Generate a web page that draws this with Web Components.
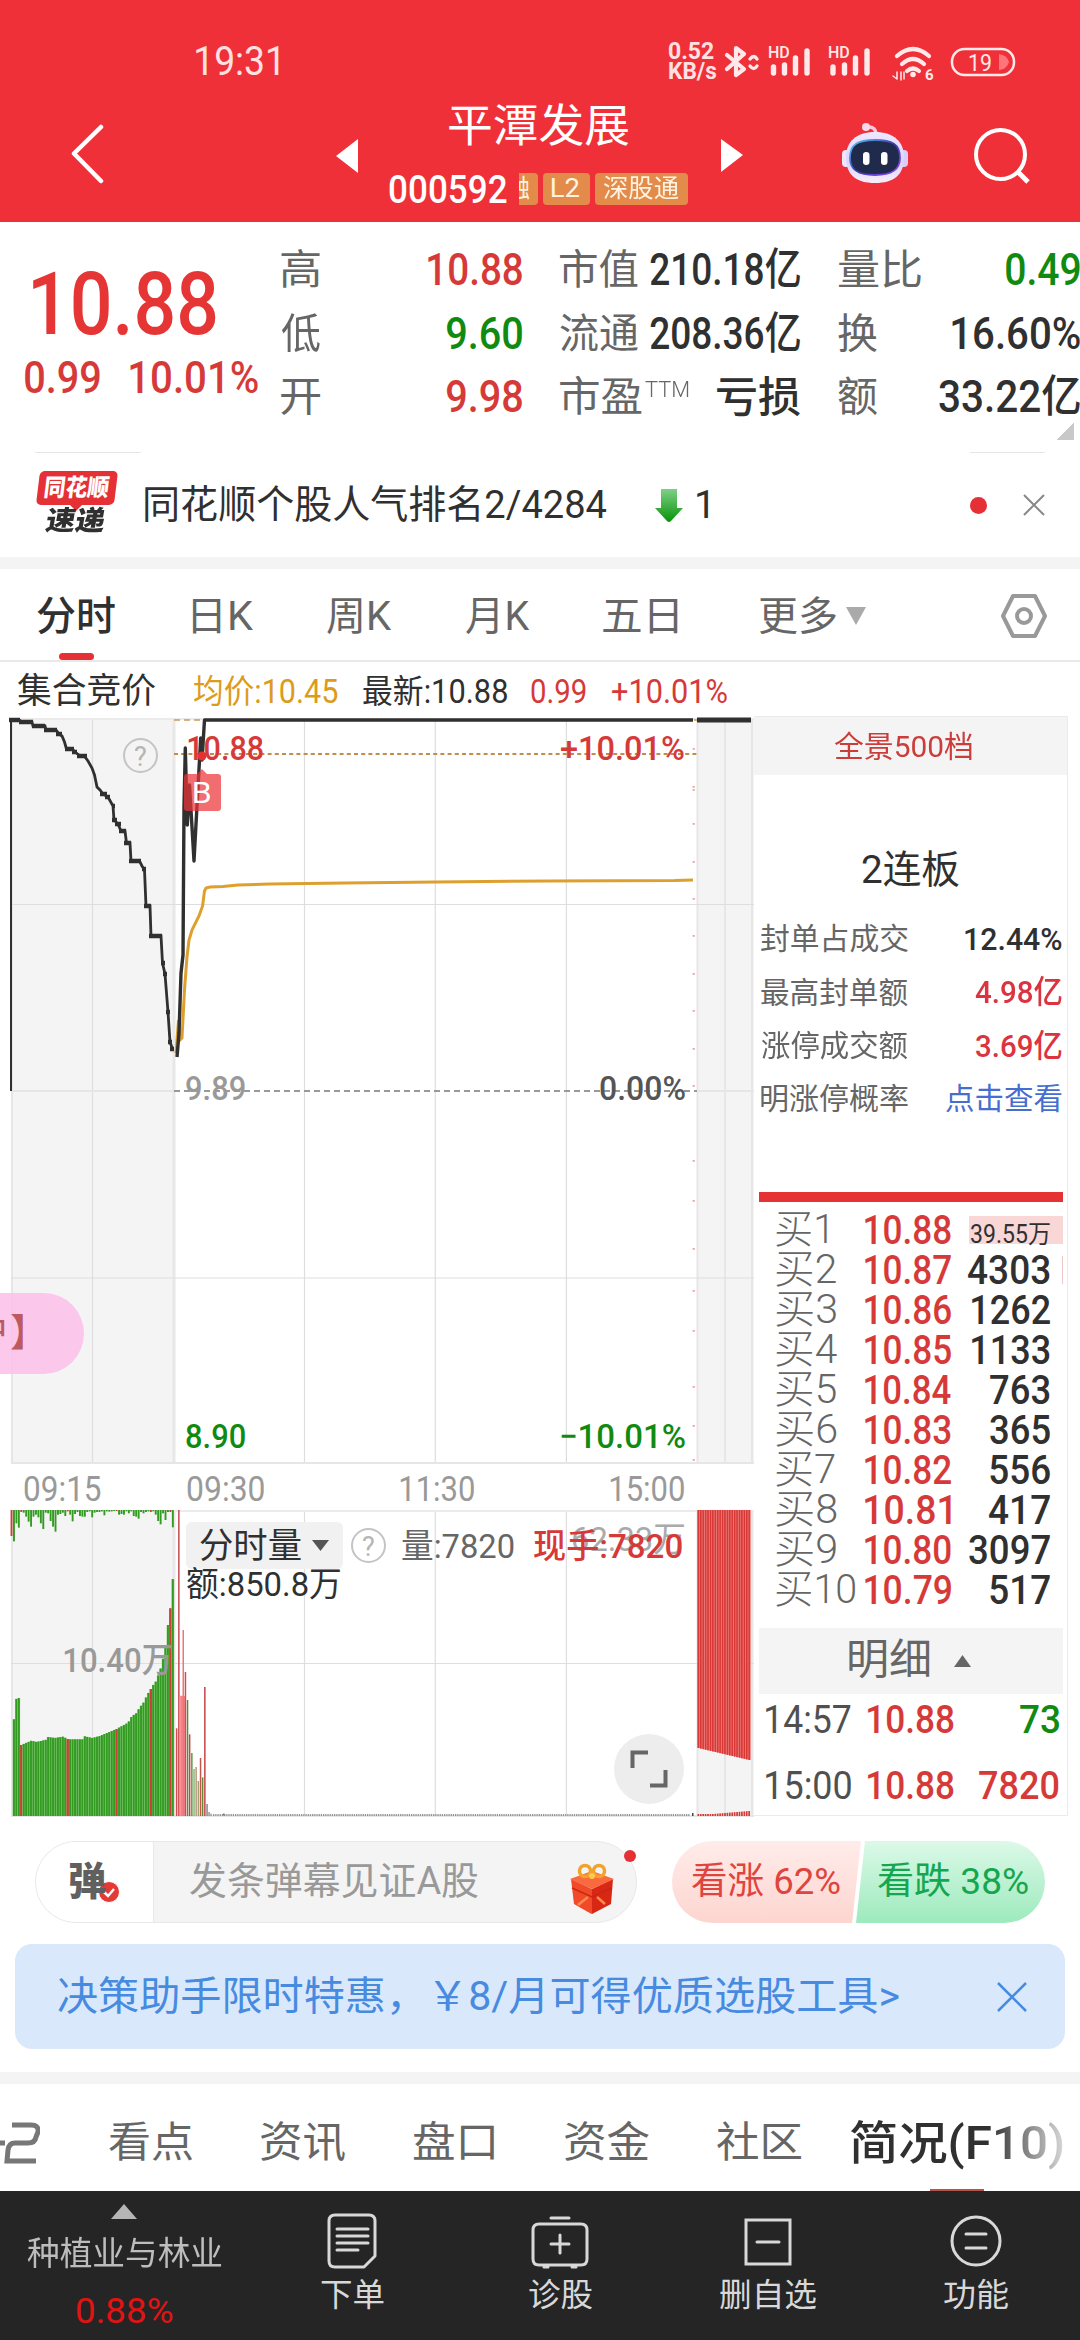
<!DOCTYPE html>
<html lang="zh-CN">
<head>
<meta charset="utf-8">
<title>平潭发展 000592</title>
<style>
    html, body { margin: 0; padding: 0; }
    body {
        --red: #d63a38;
        --green: #108a10;
        --ink: #303030;
        --muted: #666;
        width: 1080px;
        height: 2340px;
        overflow: hidden;
        background: #fff;
        color: var(--ink);
        font-family: Roboto, "Noto Sans CJK SC", sans-serif;
    }
</style>
</head>
<body>
<stock-app></stock-app>

<script>

const pen = document.createElement('canvas').getContext('2d');

// ink box of a string, so that text can be fitted to an exact width
const measure = (text, font) => {
    pen.font = font;
    const m = pen.measureText(text);
    return { left: m.actualBoundingBoxLeft, ink: m.actualBoundingBoxLeft + m.actualBoundingBoxRight };
};

const define = (name, markup, setup) => {
    const template = document.createElement('template');
    template.innerHTML = markup;
    customElements.define(name, class extends HTMLElement {
        constructor () {
            super();
            this.attachShadow({ mode: 'open' });
            this.shadowRoot.append(template.content.cloneNode(true));
        }
        connectedCallback () {
            if (setup) setup(this, this.shadowRoot);
        }
    });
};

// <fit-text w="120">text</fit-text>
define('fit-text', /*html*/ `
<style>
    :host { display: block; flex: none; line-height: 1.2; white-space: nowrap; }
    span { display: inline-block; transform-origin: 0 50%; white-space: pre; }
</style>
<span><slot></slot></span>
`, (host, root) => {
    const style = getComputedStyle(host);
    const font = `${style.fontWeight} ${style.fontSize} ${style.fontFamily}`;
    const { left, ink } = measure(host.textContent, font);
    const width = Number(host.getAttribute('w'));
    const k = width / ink;
    host.style.width = width + 'px';
    root.querySelector('span').style.transform = `translateX(${left * k}px) scaleX(${k})`;
});

define('status-bar', /*html*/ `
<style>
    :host { display: flex; align-items: center; height: 100px; padding: 12px 0 0 196px; color: #ffe1e2; box-sizing: content-box; }
    .time { font-size: 40px; }
    .speed { margin-left: 390px; font-size: 23px; font-weight: 700; line-height: 20px; }
    .speed fit-text { line-height: 20px; }
    svg { display: block; margin-left: 8px; }
    text { font-family: Roboto, sans-serif; }
</style>
<fit-text class="time" w="83">19:31</fit-text>
<div class="speed">
    <fit-text w="45">0.52</fit-text>
    <fit-text w="47">KB/s</fit-text>
</div>
<svg width="302" height="50" viewBox="724 37 302 50" fill="none" stroke="#ffe9ea" stroke-linecap="round" stroke-linejoin="round">
    <path d="M727 55l17 14-8 6V48l8 6-17 15" stroke-width="4.200"/>
    <path d="M750 59q4-5 7 0M750 66q4 5 7 0" stroke-width="3.400"/>
    <g stroke-width="5.4">
        <path d="M773.500 67v6M784.500 65v8M795.500 58v15M807 51v22"/>
        <path d="M833 67v6M844.500 65v8M855.500 58v15M867 51v22"/>
    </g>
    <path d="M897 56q16-14 32 0M902 64q11-10 22 0M907 71q6-5 12 0" stroke-width="4.200"/>
    <path d="M904 72v7M901 72v8M893 76l4 3v-7" stroke-width="1.500"/>
    <circle cx="913" cy="74.500" r="2.800" fill="#ffe9ea" stroke="none"/>
    <rect x="952" y="49" width="62" height="26" rx="12.500" stroke-width="2.500"/>
    <path d="M999 54q8 1 10 8-2 7-10 8z" fill="#ff757b" stroke="none"/>
    <g fill="#ffe9ea" stroke="none">
        <text x="768" y="58" font-size="16" font-weight="500">HD</text>
        <text x="828" y="58" font-size="16" font-weight="500">HD</text>
        <text x="925" y="80" font-size="15" font-weight="700">6</text>
        <text x="968" y="70.500" font-size="23" textLength="24" lengthAdjust="spacingAndGlyphs">19</text>
    </g>
</svg>
`);

define('stock-title', /*html*/ `
<style>
    :host { display: block; width: 299px; height: 110px; }
    .name { margin: -11px 0 0 60px; font-size: 45px; line-height: 52px; }
    .meta { display: flex; align-items: center; margin-top: 20px; height: 32px; }
    .code { font-size: 38px; font-weight: 500; line-height: 32px; margin-top: 1px; }
    .tag { height: 32px; border-radius: 4px; background: #e38b4b; font-size: 25px; display: flex; align-items: center; justify-content: center; margin-left: 5px; overflow: hidden; color: #fff3df; }
    .tag fit-text { line-height: 32px; }
    .cut { width: 19px; margin-left: 12px; justify-content: flex-end; border-radius: 0 4px 4px 0; }
    .cut fit-text { margin-right: 8px; }
</style>
<fit-text class="name" w="180">平潭发展</fit-text>
<div class="meta">
    <fit-text class="code" w="118">000592</fit-text>
    <div class="tag cut"><fit-text w="24">融</fit-text></div>
    <div class="tag" style="width:47px"><fit-text w="28">L2</fit-text></div>
    <div class="tag" style="width:94px"><fit-text w="76">深股通</fit-text></div>
</div>
`);

define('app-header', /*html*/ `
<style>
    :host { display: block; height: 222px; background: #f03038; color: #fff; }
    nav { display: flex; align-items: flex-start; }
    svg { display: block; flex: none; }
</style>
<status-bar></status-bar>
<nav>
    <svg style="margin:10px 0 0 70px" width="34" height="64" fill="none" stroke="#fff" stroke-width="4.500" stroke-linecap="round" stroke-linejoin="round"><path d="M31 5L4 31.500 31 59"/></svg>
    <svg style="margin:26px 0 0 232px" width="22" height="36"><path d="M22 1v34L0 18z" fill="#fff"/></svg>
    <stock-title style="margin-left:31px"></stock-title>
    <svg style="margin:26px 0 0 33px" width="22" height="36"><path d="M0 1v33l22-17z" fill="#fff"/></svg>
    <svg style="margin:10px 0 0 99px" width="67" height="63" viewBox="842 122 67 63">
        <defs>
            <linearGradient id="shell" x2="0" y2="1"><stop stop-color="#efe6ff"/><stop offset=".6" stop-color="#dcd4fb"/><stop offset="1" stop-color="#f7eefa"/></linearGradient>
            <linearGradient id="rim" x2="1" y2="1"><stop stop-color="#58c8f2"/><stop offset=".5" stop-color="#4038b0"/><stop offset="1" stop-color="#8b4df0"/></linearGradient>
        </defs>
        <path d="M867 127q9-1 9 8" fill="none" stroke="#f8c8de" stroke-width="3.500"/>
        <circle cx="866" cy="127" r="4" fill="#f6d9ef"/>
        <rect x="842" y="150" width="9" height="17" rx="4" fill="#eee6ff"/>
        <rect x="899" y="150" width="9" height="17" rx="4" fill="#d9cef9"/>
        <path d="M875 132c19 0 29 10 29 25 0 18-10 26-29 26s-29-8-29-26c0-15 10-25 29-25z" fill="url(#shell)"/>
        <path d="M875 140c17 0 25 4 25 18 0 12-8 17-25 17s-25-5-25-17c0-14 8-18 25-18z" fill="#202a4c" stroke="url(#rim)" stroke-width="1.800"/>
        <rect x="863" y="152" width="6.500" height="13" rx="3.200" fill="#fff"/>
        <rect x="881" y="152" width="6.500" height="13" rx="3.200" fill="#fff"/>
    </svg>
    <svg style="margin:14px 0 0 64px" width="60" height="60" fill="none" stroke="#fff" stroke-width="4"><circle cx="27.500" cy="28.500" r="24.500"/><path d="M44 45l11 11" stroke-width="5"/></svg>
</nav>
`);

define('quote-summary', /*html*/ `
<style>
    :host { display: flex; height: 230px; font-size: 44px; font-weight: 500; }
    .main { width: 281px; flex: none; color: var(--red); }
    .price { margin: 28.500px 0 0 33px; font-size: 87px; line-height: 106px; color: #e53535; }
    .change { display: flex; gap: 30px; margin: -5px 0 0 25px; }
    .cols { display: grid; grid-template-columns: 241px 38px 240px 38px 242px; grid-auto-rows: 63.500px; padding-top: 17px; height: 190px; }
    .cell { display: flex; align-items: center; justify-content: space-between; }
    .key { font-size: 41px; font-weight: 400; color: var(--muted); }
    .up { color: var(--red); }
    .down { color: var(--green); }
    .ttm { font-size: 22px; font-weight: 300; margin: -16px 22px 0 -3px; color: var(--muted); }
    .corner { align-self: flex-end; margin: 0 0 12px -23px; width: 17px; height: 18px; background: linear-gradient(135deg, transparent 50%, #c8c8c8 50%); }
</style>
<div class="main">
    <fit-text class="price" w="183">10.88</fit-text>
    <div class="change"><fit-text w="75">0.99</fit-text><fit-text w="128">10.01%</fit-text></div>
</div>
<div class="cols">
    <div class="cell"><fit-text class="key" w="39">高</fit-text><fit-text class="up" w="94">10.88</fit-text></div><i></i>
    <div class="cell"><fit-text class="key" w="78">市值</fit-text><fit-text w="150">210.18亿</fit-text></div><i></i>
    <div class="cell"><fit-text class="key" w="83">量比</fit-text><fit-text class="down" w="74">0.49</fit-text></div>
    <div class="cell"><fit-text class="key" w="39">低</fit-text><fit-text class="down" w="75">9.60</fit-text></div><i></i>
    <div class="cell"><fit-text class="key" w="78">流通</fit-text><fit-text w="150">208.36亿</fit-text></div><i></i>
    <div class="cell"><fit-text class="key" w="39">换</fit-text><fit-text w="128">16.60%</fit-text></div>
    <div class="cell"><fit-text class="key" w="39">开</fit-text><fit-text class="up" w="75">9.98</fit-text></div><i></i>
    <div class="cell"><fit-text class="key" w="82">市盈</fit-text><fit-text class="ttm" w="44">TTM</fit-text><fit-text w="83" style="font-size:42px">亏损</fit-text></div><i></i>
    <div class="cell"><fit-text class="key" w="39">额</fit-text><fit-text w="141">33.22亿</fit-text></div>
</div>
<div class="corner"></div>
`);

define('news-strip', /*html*/ `
<style>
    :host { display: block; height: 105px; border-bottom: 12px solid #f4f4f4; }
    .rules { display: flex; justify-content: space-between; padding: 0 35px; }
    .rules i { height: 1px; width: 75px; background: #e6e6e6; }
    .rules i:first-child { width: 106px; }
    .row { display: flex; align-items: center; height: 104px; font-size: 39px; }
    .logo { margin-left: 35px; width: 84px; height: 68px; }
    .badge { width: 78px; height: 34px; transform: skewX(-7deg); background: #e53035; border-radius: 5px; margin-left: 3px; color: #fff; font-size: 24px; font-weight: 900; display: flex; align-items: center; justify-content: center; }
    .tail { width: 0; height: 0; border: solid transparent; border-width: 6px 6px 0; border-top-color: #e53035; margin-left: 35px; }
    .word { font-size: 27px; font-weight: 900; transform: skewX(-10deg); margin: -6px 0 0 11px; line-height: 32px; }
    .dot { width: 17px; height: 17px; border-radius: 50%; background: #e53035; margin-left: 262px; }
</style>
<div class="rules"><i></i><i></i></div>
<div class="row">
    <div class="logo">
        <div class="badge"><fit-text w="64">同花顺</fit-text></div>
        <div class="tail"></div>
        <fit-text class="word" w="59">速递</fit-text>
    </div>
    <fit-text w="462" style="margin-left:26px">同花顺个股人气排名2/4284</fit-text>
    <svg width="28" height="33" style="margin-left:48px"><defs><linearGradient id="d" x2="0" y2="1"><stop stop-color="#7ed087"/><stop offset="1" stop-color="#079307"/></linearGradient></defs><path d="M6 0h16v19h6L16 32q-2 2-4 0L0 19h6z" fill="url(#d)"/></svg>
    <fit-text w="11" style="margin-left:14px">1</fit-text>
    <div class="dot"></div>
    <svg width="22" height="22" style="margin-left:36px" stroke="#888" stroke-width="2"><path d="M1 1l20 20M21 1L1 21"/></svg>
</div>
`);

define('period-tabs', /*html*/ `
<style>
    :host { display: flex; align-items: center; height: 93px; border-bottom: 2px solid #e9e9e9; box-sizing: border-box; font-size: 40px; color: var(--muted); }
    :host > fit-text { margin-top: 4px; }
    .on { width: 78px; height: 91px; margin-left: 37px; color: var(--ink); font-weight: 500; display: flex; flex-direction: column; align-items: center; }
    .on fit-text { line-height: 84px; margin-top: 6px; }
    .on i { width: 35px; height: 9px; border-radius: 4px; background: #e53035; margin-top: -6px; }
    .tab { margin-top: 4px; }
</style>
<div class="on"><fit-text w="78">分时</fit-text><i></i></div>
<fit-text class="tab" w="61" style="margin-left:78px">日K</fit-text>
<fit-text class="tab" w="65" style="margin-left:73px">周K</fit-text>
<fit-text class="tab" w="64" style="margin-left:74px">月K</fit-text>
<fit-text class="tab" w="75" style="margin-left:73px">五日</fit-text>
<fit-text class="tab" w="77" style="margin-left:81px">更多</fit-text>
<svg width="20" height="18" style="margin:2px 0 0 10px"><path d="M0 0h20L10 18z" fill="#aaa"/></svg>
<svg width="46" height="44" style="margin:3px 0 0 135px" fill="none" stroke="#999" stroke-width="4" stroke-linejoin="round"><path d="M12 2h22l10 20-10 20H12L2 22z"/><circle cx="23" cy="22" r="7"/></svg>
`);

define('price-line', /*html*/ `
<style>
    :host { display: flex; align-items: center; height: 54px; box-sizing: border-box; padding: 5px 0 0 18px; font-size: 33px; }
</style>
<fit-text w="137" style="font-size:35px">集合竞价</fit-text>
<fit-text w="144" style="margin-left:39px;color:#dd9b1c">均价:10.45</fit-text>
<fit-text w="144" style="margin-left:25px">最新:10.88</fit-text>
<fit-text w="55" style="margin-left:24px;color:var(--red)">0.99</fit-text>
<fit-text w="115" style="margin-left:26px;color:var(--red)">+10.01%</fit-text>
`);

define('trend-chart', /*html*/ `
<style>
    :host { display: block; flex: none; width: 754px; height: 1106px; }
    svg { display: block; }
</style>
<svg width="754" height="1106" viewBox="0 716 754 1106" fill="none">
    <g id="grid"></g>
    <g id="volume"></g>
    <g id="price"></g>
    <g id="labels" font-family="Roboto, 'Noto Sans CJK SC', sans-serif"></g>
</svg>
`, (host, root) => {
    const el = id => root.getElementById(id);
    const line = (x1, y1, x2, y2, color = '#dedede', width = 1.2, extra = '') =>
        `<path d="M${x1} ${y1}L${x2} ${y2}" stroke="${color}" stroke-width="${width}" ${extra}/>`;
    const rect = (x, y, w, h, fill, extra = '') =>
        `<rect x="${x}" y="${y}" width="${w}" height="${h}" fill="${fill}" ${extra}/>`;

    // background panels and grid
    let grid = '';
    for (const [top, bottom] of [[718, 1463], [1510, 1816]]) {
        grid += rect(11, top, 163, bottom - top, '#f4f4f4') + rect(697, top, 57, bottom - top, '#f4f4f4');
        grid += line(12, top, 12, bottom, '#e6e6e6', 2) + line(174, top, 174, bottom, '#e8e8e8', 3);
        grid += line(697.5, top, 697.5, bottom, '#e6e6e6', 2) + line(752, top, 752, bottom, '#e6e6e6', 2);
        for (const x of [92.5, 304.5, 435.3, 566.4, 725]) grid += line(x, top, x, bottom);
        grid += line(11, top + 1, 754, top + 1, '#ebebeb', 2) + line(11, bottom, 754, bottom, '#e6e6e6', 2);
    }
    for (const y of [904.5, 1278, 1663.5]) grid += line(11, y, 754, y);
    grid += line(11, 1091, 174, 1091, '#e6e6e6', 2) + line(697, 1091, 754, 1091, '#e6e6e6', 2);
    el('grid').innerHTML = grid;

    // call auction volume, one bar every 2.44px
    const green = '#339a22';
    const red = '#cc3f36';
    const upper = [78, 94, 40, 53, 6, 8, 20, 35, 50, 20, 14, 22, 40, 57, 8, 10, 33, 50, 65, 14, 12, 8, 18, 4, 14, 34, 12, 6, 18, 20, 20, 6, 4, 22, 8, 6, 6, 4, 16, 4, 5, 4, 3, 3, 14, 12, 14, 4, 10, 4, 18, 20, 26, 6, 10, 6, 4, 6, 4, 14, 33, 43, 10, 30, 6, 6, 52];
    const shape = [[42, 658], [50, 594], [57, 594], [64, 735], [95, 722], [110, 726], [140, 719], [145, 711], [165, 714], [190, 710], [205, 718], [247, 718], [254, 709], [278, 714], [300, 708], [350, 687], [385, 668], [395, 650], [408, 640], [430, 608], [452, 567], [467, 545], [480, 515], [490, 475], [498, 430], [503, 385], [511, 325], [519, 237]];
    const reds = [4, 23, 43, 57, 65];
    let volume = '';
    upper.forEach((length, i) => {
        const zx = 35 + i * 7.333;
        const x = zx / 3 - 1.1;
        const color = reds.includes(i) ? red : green;
        volume += rect(x, 1510, 1.9, length / 3, i === 0 ? red : color);
        if (i === 0) return;
        let n = shape.findIndex(p => p[0] >= zx - 1);
        if (n < 1) n = i === 1 ? 0 : n < 0 ? shape.length - 1 : n;
        const b = shape[n];
        const a = shape[n - 1] || b;
        const t = a === b ? 0 : Math.min(1, (zx - a[0]) / (b[0] - a[0]));
        const y = 1500 + (a[1] + (b[1] - a[1]) * t) / 3;
        volume += rect(x - .3, y, 2.5, 1816 - y, reds.includes(i) ? '#bc5a3c' : '#6bbf5c') + rect(x, y, 1.8, 1816 - y, color);
    });

    // continuous trading
    const trades = [[176.6, 685, '#d9494f'], [178.8, 30, '#c94a52'], [181, 587, '#f87c82'], [183.2, 390, '#e8767b'], [185.4, 516, '#d9494f'], [187.5, 600, '#5d8b35'], [189.6, 703, '#bd4a3e'], [191.8, 759, '#5e9948'], [194, 807, '#8fb777'], [196.1, 801, '#bc9684'], [198.3, 843, '#9ea36f'], [200.5, 774, '#c4564c'], [202.6, 832, '#5f8b39'], [204.8, 561, '#c94348'], [207, 912, '#888'], [209, 936, '#999'], [211, 941, '#999']];
    volume += rect(180.500, 1696, 5, 120, '#fb8c91');
    for (const [x, top, color] of trades) volume += rect(x - .7, 1500 + top / 3, 1.5, 316 - top / 3, color);
    volume += line(213, 1815, 690, 1815, '#777', 1.6, 'stroke-dasharray="1.3 .9"') + rect(223, 1813.5, 1.5, 2, '#777') + rect(692, 1813, 1.5, 3, '#444');

    // closing auction
    for (let x = 697.5, i = 0; x < 750; x += 2.42, i++) {
        const y = 1748 + i * .57;
        volume += rect(x, 1510, 2.42, y - 1510, '#ef7472') + rect(x, 1510, 1.6, y - 1510, '#d83835');
        const low = 1814 - Math.max(0, i - 6) * .2;
        volume += rect(x, low, 1.7, 1816 - low, '#d83835');
    }
    el('volume').innerHTML = volume;

    const dark = '#303030';
    const auction = '9,720 19,720 22,722 32,722 33,726 45,726 46,730 56,730 59,734 62,736 64.5,742 66.500,749 72,749 75,752 79,755 85,757 88,761 92,768 94.500,775 97,787 100,790 103,794 108,797 113,806 114,820 118,824 121,831 125,831 126.500,843 130,843 131,861 139.500,861 142,866 144.500,870 146,906 150,906 151,936 161,936 162.500,963 165,974 168,1012 170,1042 172.500,1049';
    let marks = '';
    for (const [x, y, w] of [[9, 720, 11], [19, 722, 14], [32, 726, 13], [44, 730, 13], [56, 734, 6], [65, 749, 9], [72, 752, 5], [77, 756, 10], [100, 794, 7], [105, 797, 5], [112, 806, 3], [112, 820, 5], [115, 824, 6], [119, 831, 7], [124, 843, 7], [129, 861, 12], [142, 869, 4], [144, 906, 7], [149, 936, 13], [161, 963, 4], [163, 974, 4], [166, 1012, 4], [168, 1042, 4], [170, 1049, 4]]) {
        marks += line(x, y, x + w, y, dark, 4.500);
    }
    let ticks = '';
    for (const y of [748, 786, 789, 823, 861, 898, 935, 973, 1010, 1048, 1085, 1160, 1200, 1248, 1290, 1330, 1386, 1425, 1459]) ticks += rect(692.500, y, 2.500, 1.800, '#efb0ae');
    el('price').innerHTML =
        line(174, 720, 697, 720, '#c69b63', 1.500, 'stroke-dasharray="6 4"') +
        line(174, 754, 697, 754, '#c28c4c', 1.800, 'stroke-dasharray="4 3.200"') +
        line(174, 1091, 697, 1091, '#999', 1.800, 'stroke-dasharray="6 4"') + ticks +
        line(11, 720, 11, 1091, dark, 2) +
        `<polyline points="${auction}" stroke="${dark}" stroke-width="2.800"/>` + marks +
        `<polyline points="176,1053 178.500,1020 180,1040 182,1038 184.500,990 187,957 189,940 192,930 199,916 202.600,906 204.500,891 206,888 210,887 223,886.500 238,885 270,884 345,883 436,882 550,881 675,880.500 693,880" stroke="#dda02e" stroke-width="3"/>
        <polyline points="177,1057 179,1033 181,973 183,955 184,807 185.300,748 187.300,825 189.500,785 194,861 200.700,738 202,760 204.500,720 693,720" stroke="${dark}" stroke-width="3.400" stroke-linejoin="round"/>` +
        line(697, 720, 751, 720, dark, 5) +
        `<circle cx="202" cy="756" r="4.500" fill="#e53035"/>
        <path d="M197 774l5-5 5 5h11q3 0 3 3v31q0 3-3 3h-31q-3 0-3-3v-31q0-3 3-3z" fill="#eb3438" fill-opacity=".72"/>`;

    // x, centre y, ink width, size, weight, colour
    const labels = [
        ['10.88', 188, 748, 75, 34, 500, '#d63a38'],
        ['+10.01%', 561, 748, 123, 34, 500, '#d63a38'],
        ['B', 194, 792.5, 16, 30, 400, '#fff'],
        ['9.89', 186, 1088, 59, 34, 500, '#999'],
        ['0.00%', 600, 1088, 85, 34, 500, '#555'],
        ['8.90', 186, 1436, 59, 34, 500, '#108a10'],
        ['−10.01%', 561, 1436, 124, 34, 500, '#108a10'],
        ['09:15', 24, 1489, 77, 35, 400, '#999'],
        ['09:30', 187, 1489, 77, 35, 400, '#999'],
        ['11:30', 400, 1489, 74, 35, 400, '#999'],
        ['15:00', 610, 1489, 74, 35, 400, '#999'],
        ['62.33万', 573, 1539, 111, 34, 400, '#aaa'],
        ['10.40万', 64, 1660, 107, 34, 500, '#999'],
        ['量:7820', 402, 1546, 112, 34, 400, '#666'],
        ['现手:7820', 534, 1546, 148, 34, 500, '#d63a38'],
        ['额:850.8万', 187, 1584, 153, 34, 400, '#303030'],
        ['分时量', 200, 1546, 101, 35, 400, '#303030'],
        ['?', 134, 756, 12, 27, 400, '#b5b5b5'],
        ['?', 362, 1546, 12, 27, 400, '#b5b5b5']
    ];
    let text = rect(186, 1522, 157, 47, '#f1f1f1', 'rx="6"');
    for (const [string, x, y, width, size, weight, color] of labels) {
        const { left, ink } = measure(string, `${weight} ${size}px Roboto, "Noto Sans CJK SC", sans-serif`);
        const k = width / ink;
        text += `<text transform="translate(${x + left * k} ${y + size * .355}) scale(${k} 1)" font-size="${size}" font-weight="${weight}" fill="${color}">${string}</text>`;
    }
    text += `<circle cx="140.500" cy="755.500" r="16.500" stroke="#c4c4c4" stroke-width="2"/>
        <circle cx="368.500" cy="1545.500" r="16.500" stroke="#c4c4c4" stroke-width="2"/>
        <path d="M312 1540h17l-8.500 11z" fill="#555"/>
        <circle cx="649" cy="1769" r="35" fill="#ededed"/>
        <path d="M632.500 1768v-15.500h15.500M665.500 1770v15.500h-15.500" stroke="#666" stroke-width="4"/>`;
    el('labels').innerHTML = text;
});

define('limit-row', /*html*/ `
<style>
    :host { display: flex; align-items: center; justify-content: space-between; height: 53.200px; padding: 0 5px 0 7px; font-size: 30px; }
    ::slotted(*) { color: var(--muted); }
    ::slotted([slot=value]) { color: var(--tone, var(--ink)); }
</style>
<slot></slot><slot name="value"></slot>
`);

define('order-book', /*html*/ `
<style>
    :host { display: block; flex: none; width: 314px; height: 1100px; box-sizing: border-box; border: 1px solid #ebebeb; border-left-width: 0; }
    .depth { display: flex; justify-content: center; height: 58px; background: #f4f4f4; color: #cb3d3a; font-size: 30px; }
    .depth fit-text { line-height: 60px; margin-right: 15px; }
    .streak { display: flex; justify-content: center; font-size: 39px; margin: 72px 0 19px 0; }
    .value { font-size: 32px; font-weight: 500; }
    .wall { height: 10px; background: #e53232; margin: 66px 4px 0 5px; }
    .levels { padding: 8px 4px 0 22px; }
    .level { display: grid; grid-template-columns: 89px 86px 1fr; align-items: center; height: 40px; font-size: 41px; font-weight: 500; }
    .level fit-text { line-height: 40px; }
    .level .side { font-size: 40px; font-weight: 300; color: var(--muted); }
    .level .cost { color: var(--red); }
    .lots { display: flex; justify-content: flex-end; padding-right: 13px; height: 28px; align-items: center; }
    .first { background: #f9d7d7; margin-left: 18px; font-size: 25px; font-weight: 400; }
    .first fit-text { margin-top: 11px; }
    .second { border-right: 1px solid #f0c8c8; padding-right: 12px; }
    .detail { display: flex; align-items: center; height: 66px; background: #f4f4f4; margin: 18px 4px 0 5px; color: var(--muted); font-size: 42px; }
    .deal { display: flex; height: 66px; align-items: center; padding: 0 8px 0 12px; font-size: 39px; font-weight: 500; }
    .deal :first-child { color: #505050; font-weight: 400; }
    .deal :last-child { margin-left: auto; }
    .up { color: var(--red); }
    .down { color: var(--green); }
</style>
<div class="depth"><fit-text w="138">全景500档</fit-text></div>
<div class="streak"><fit-text w="97">2连板</fit-text></div>
<limit-row><fit-text w="147">封单占成交</fit-text><fit-text class="value" slot="value" w="97">12.44%</fit-text></limit-row>
<limit-row style="--tone:#dc3340"><fit-text w="147">最高封单额</fit-text><fit-text class="value" slot="value" w="87">4.98亿</fit-text></limit-row>
<limit-row style="--tone:#dc3340"><fit-text w="147">涨停成交额</fit-text><fit-text class="value" slot="value" w="86">3.69亿</fit-text></limit-row>
<limit-row style="--tone:#466dd0"><fit-text w="147">明涨停概率</fit-text><fit-text slot="value" w="116">点击查看</fit-text></limit-row>
<div class="wall"></div>
<div class="levels"></div>
<div class="detail">
    <fit-text w="81" style="margin-left:90px">明细</fit-text>
    <svg width="17" height="12" style="margin-left:24px"><path d="M0 12L8.500 0 17 12z" fill="#666"/></svg>
</div>
<div class="deal" style="margin-top:-6px"><fit-text w="85">14:57</fit-text><fit-text class="up" w="86" style="margin-left:17px">10.88</fit-text><fit-text class="down" w="39">73</fit-text></div>
<div class="deal"><fit-text w="85">15:00</fit-text><fit-text class="up" w="86" style="margin-left:17px">10.88</fit-text><fit-text class="up" w="80">7820</fit-text></div>
`, (host, root) => {
    const lots = [['39.55万', 79], ['4303', 82], ['1262', 78], ['1133', 78], ['763', 60], ['365', 60], ['556', 60], ['417', 61], ['3097', 81], ['517', 60]];
    root.querySelector('.levels').innerHTML = lots.map(([lot, width], i) => `
        <div class="level">
            <fit-text class="side" w="${[51, 60, 60, 61, 60, 61, 59, 61, 60, 79][i]}">买${i + 1}</fit-text>
            <fit-text class="cost" w="86">${(10.88 - i / 100).toFixed(2)}</fit-text>
            <div class="lots ${['first', 'second'][i] || ''}"><fit-text w="${width}">${lot}</fit-text></div>
        </div>`).join('');
});

define('comment-bar', /*html*/ `
<style>
    :host { display: flex; align-items: center; height: 82px; padding: 19px 0 0 35px; font-size: 38px; }
    .field { display: flex; align-items: center; width: 602px; height: 82px; box-sizing: border-box; border: 1px solid #e8e8e8; border-radius: 41px; background: #f4f4f4; position: relative; }
    .mark { display: flex; align-items: center; width: 117px; height: 80px; border-radius: 40px 0 0 40px; background: #fff; border-right: 1px solid #e8e8e8; font-weight: 900; }
    .check { margin: 20px 0 0 -8px; }
    .dot { position: absolute; right: 0; top: 8px; width: 12px; height: 12px; border-radius: 50%; background: #e53035; }
    .vote { display: flex; margin-left: 35px; width: 373px; height: 82px; border-radius: 41px; overflow: hidden; }
    .vote div { display: flex; align-items: center; font-size: 37px; box-sizing: border-box; }
    .bull { width: 189px; padding-left: 20px; color: #e0443e; background: linear-gradient(#ffecea, #fdd5d0); clip-path: polygon(0 0, 100% 0, 180px 100%, 0 100%); }
    .bear { width: 190px; margin-left: -6px; padding-left: 23px; color: #15a650; background: linear-gradient(#dcf9e8, #9deabd); clip-path: polygon(10px 0, 100% 0, 100% 100%, 1px 100%); }
</style>
<div class="field">
    <div class="mark">
        <fit-text w="36" style="margin-left:34px;font-size:39px;color:#606060">弹</fit-text>
        <svg class="check" width="22" height="22"><circle cx="11" cy="11" r="10.500" fill="#e53935" stroke="#fff"/><path d="M6 11l4 4 6-7" fill="none" stroke="#fff" stroke-width="2.500"/></svg>
    </div>
    <fit-text w="288" style="margin-left:36px;color:#999">发条弹幕见证A股</fit-text>
    <svg width="46" height="52" style="margin:13px 0 0 91px" viewBox="569 1864 46 52">
        <path d="M571 1880l21 10v25q-1 0-18-10z" fill="#f04a28"/>
        <path d="M613 1880l-21 10v25l19-10z" fill="#d92716"/>
        <path d="M570 1880l22-8 22 8-22 10z" fill="#fa6a40"/>
        <path d="M572 1889l20 9 20-9" fill="none" stroke="#c92613" stroke-width="1.500"/>
        <path d="M588 1898l-10 8M597 1898l8 7" stroke="#ff8a50" stroke-width="2.500"/>
        <g fill="none" stroke="#f2a32c" stroke-width="3.500"><ellipse cx="585" cy="1872" rx="5.500" ry="5.500"/><ellipse cx="599" cy="1872" rx="5.500" ry="5.500"/></g>
        <circle cx="592" cy="1877" r="3" fill="#ffc94c"/>
    </svg>
    <i class="dot"></i>
</div>
<div class="vote">
    <div class="bull"><fit-text w="148">看涨 62%</fit-text></div>
    <div class="bear"><fit-text w="150">看跌 38%</fit-text></div>
</div>
`);

define('promo-banner', /*html*/ `
<style>
    :host { display: flex; align-items: center; height: 105px; margin: 21px 15px 23px; border-radius: 17px; background: #dae8fb; color: #468be0; font-size: 40px; }
</style>
<fit-text w="841" style="margin-left:43px">决策助手限时特惠，￥8/月可得优质选股工具></fit-text>
<svg width="30" height="30" style="margin-left:98px" stroke="#468be0" stroke-width="2.500"><path d="M1 1l28 28M29 1L1 29"/></svg>
`);

define('section-tabs', /*html*/ `
<style>
    :host { display: flex; align-items: center; height: 107px; border-top: 12px solid #f4f4f4; font-size: 42px; color: var(--muted); overflow: hidden; }
    fit-text { margin-top: 12px; }
    .on { position: relative; margin-left: 49px; width: 213px; height: 107px; display: flex; align-items: center; color: var(--ink); font-size: 46px; font-weight: 500; }
    .on fit-text { -webkit-mask-image: linear-gradient(90deg, #000 65%, rgba(0, 0, 0, .2)); mask-image: linear-gradient(90deg, #000 65%, rgba(0, 0, 0, .2)); }
    .on i { position: absolute; bottom: 0; left: 80px; width: 54px; height: 2px; background: #b8534c; }
</style>
<svg width="40" height="44" style="margin-top:10px" fill="none" stroke="#777" stroke-width="5"><path d="M0 22h5M12 4h19q8 0 7 7l-2 5q-1 6-8 6H15q-6 0-7 7l-1 11h29"/></svg>
<fit-text w="83" style="margin-left:69px">看点</fit-text>
<fit-text w="84" style="margin-left:69px">资讯</fit-text>
<fit-text w="81" style="margin-left:68px">盘口</fit-text>
<fit-text w="84" style="margin-left:71px">资金</fit-text>
<fit-text w="84" style="margin-left:68px">社区</fit-text>
<div class="on"><fit-text w="213">简况(F10)</fit-text><i></i></div>
`);

define('nav-item', /*html*/ `
<style>
    :host { display: flex; flex-direction: column; align-items: center; width: 208px; font-size: 32px; color: #d8d8d8; }
    .icon { height: 56px; margin-top: 22px; }
    .label { margin-top: 7px; }
</style>
<div class="icon"><slot name="icon"></slot></div>
<div class="label"><slot></slot></div>
`);

define('bottom-nav', /*html*/ `
<style>
    :host { display: flex; height: 149px; background: #252525; }
    .sector { display: flex; flex-direction: column; align-items: center; width: 248px; flex: none; color: #bdbdbd; font-size: 33px; }
    .sector svg { margin-top: 12px; }
    svg { display: block; fill: none; stroke: #d8d8d8; stroke-width: 3; stroke-linecap: round; stroke-linejoin: round; }
</style>
<div class="sector">
    <svg width="26" height="16"><path d="M0 16L13 1l13 15z" fill="#b5b5b5" stroke="none"/></svg>
    <fit-text w="195" style="margin-top:15px">种植业与林业</fit-text>
    <fit-text w="97" style="margin-top:17px;color:#e01414;font-size:35px">0.88%</fit-text>
</div>
<nav-item><svg slot="icon" width="50" height="56"><path d="M8 2h34q6 0 6 6v35L37 54H8q-6 0-6-6V8q0-6 6-6z"/><path d="M10 16h31M10 23h31M10 30h31M10 37h21"/></svg><fit-text w="63">下单</fit-text></nav-item>
<nav-item><svg slot="icon" width="58" height="56"><path d="M8 11h42q6 0 6 6v29q0 6-6 6H8q-6 0-6-6V17q0-6 6-6zM20 5h18M29 22v18M20 31h18M13 54h4M41 54h4"/></svg><fit-text w="63">诊股</fit-text></nav-item>
<nav-item><svg slot="icon" width="48" height="56" style="stroke-linejoin:miter"><path d="M2 7h44v44H2z"/><path d="M13 29h22"/></svg><fit-text w="96">删自选</fit-text></nav-item>
<nav-item><svg slot="icon" width="54" height="56"><circle cx="27" cy="28" r="24"/><path d="M17 21h20M17 35h20"/></svg><fit-text w="64">功能</fit-text></nav-item>
`);

define('bullet-comment', /*html*/ `
<style>
    :host { position: absolute; left: 0; top: 1293px; width: 84px; height: 81px; border-radius: 0 41px 41px 0; background: rgba(252, 190, 232, .85); overflow: hidden; color: #bd5a60; font-size: 38px; }
    fit-text { line-height: 80px; margin-left: -27px; }
</style>
<fit-text w="50">户】</fit-text>
`);

define('stock-app', /*html*/ `
<style>
    :host { display: block; position: relative; width: 1080px; height: 2340px; overflow: hidden; background: #fff; }
    .board { display: flex; height: 1106px; }
</style>
<app-header></app-header>
<quote-summary></quote-summary>
<news-strip></news-strip>
<period-tabs></period-tabs>
<price-line></price-line>
<div class="board">
    <trend-chart></trend-chart>
    <order-book></order-book>
</div>
<comment-bar></comment-bar>
<promo-banner></promo-banner>
<section-tabs></section-tabs>
<bottom-nav></bottom-nav>
<bullet-comment></bullet-comment>
`);

</script>
</body>
</html>
